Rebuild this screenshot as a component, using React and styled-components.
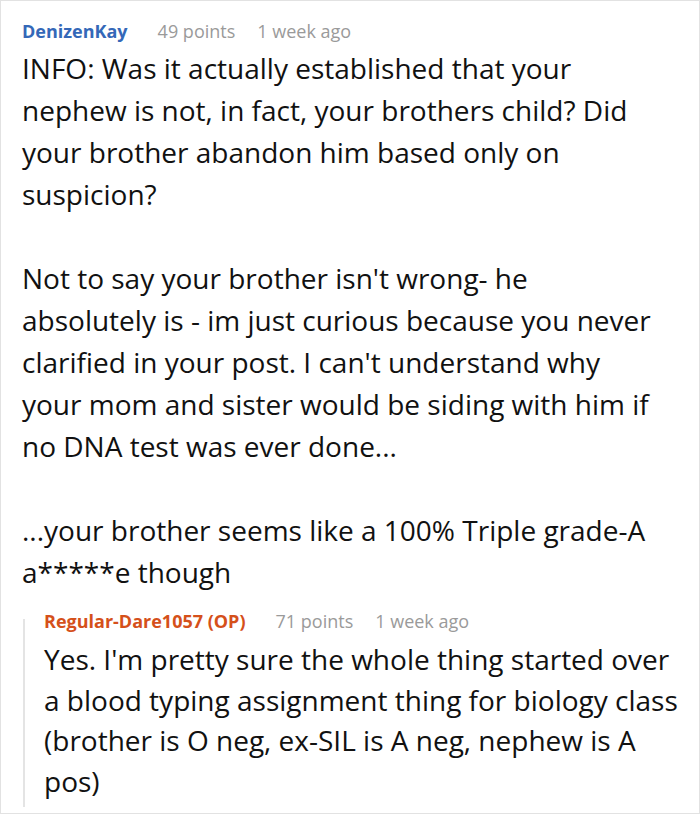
import React from 'react';
import styled, { createGlobalStyle } from 'styled-components';

const GlobalStyle = createGlobalStyle`
  body {
    margin: 0;
    background: #fff;
    font-family: "Open Sans", "Noto Sans", sans-serif;
  }
`

const StyledCard = styled.div`
  box-sizing: border-box;
  width: 700px;
  height: 814px;
  padding: 18px 9px 0 21px;
  border: 1px solid #e2e2e2;
  background: #fff;
  overflow: hidden;
`

const StyledMeta = styled.div`
  display: flex;
  align-items: center;
  gap: 22px;
  height: 24px;
  margin-bottom: ${props => props.$gap || 4}px;
  font-size: 18px;
  line-height: 24px;
  color: #9a9a9a;
  white-space: nowrap;
`

const StyledAuthor = styled.span`
  font-weight: 700;
  color: ${props => props.$op ? '#d5501a' : '#3468b8'};
  margin-right: 8px;
`

const StyledBody = styled.div`
  max-width: ${props => props.$width ? `${props.$width}px` : 'none'};
  font-size: 28px;
  line-height: ${props => props.$lh || 42}px;
  color: #111;

  p {
    margin: 0 0 ${props => props.$lh || 42}px;
  }

  p:last-child {
    margin-bottom: 0;
  }
`

const StyledReply = styled.div`
  position: relative;
  margin-top: 16px;
  padding-left: 22px;

  &::before {
    content: '';
    position: absolute;
    left: 1px;
    top: 10px;
    bottom: -6px;
    width: 2px;
    background: #e4e4e4;
  }
`

const Comment = ({ author, points, time, op, gap, lh, width, children }) => (
  <div>
    <StyledMeta $gap={gap}>
      <StyledAuthor $op={op}>{author}</StyledAuthor>
      <span>{points} points</span>
      <span>{time}</span>
    </StyledMeta>
    <StyledBody $lh={lh} $width={width}>{children}</StyledBody>
  </div>
)

export default function App() {
  return (
    <>
      <GlobalStyle />
      <StyledCard>
        <Comment author="DenizenKay" points={49} time="1 week ago" width={636}>
          <p>
            INFO: Was it actually established that your nephew is not, in fact, your brothers child? Did your brother abandon him based only on suspicion?
          </p>
          <p>
            Not to say your brother isn't wrong- he absolutely is - im just curious because you never clarified in your post. I can't understand why your mom and sister would be siding with him if no DNA test was ever done...
          </p>
          <p>...your brother seems like a 100% Triple grade-A a*****e though</p>
        </Comment>
        <StyledReply>
          <Comment author="Regular-Dare1057 (OP)" points={71} time="1 week ago" op gap={6} lh={40.5}>
            <p>
              Yes. I'm pretty sure the whole thing started over a blood typing assignment thing for biology class (brother is O neg, ex-SIL is A neg, nephew is A pos)
            </p>
          </Comment>
        </StyledReply>
      </StyledCard>
    </>
  );
}
